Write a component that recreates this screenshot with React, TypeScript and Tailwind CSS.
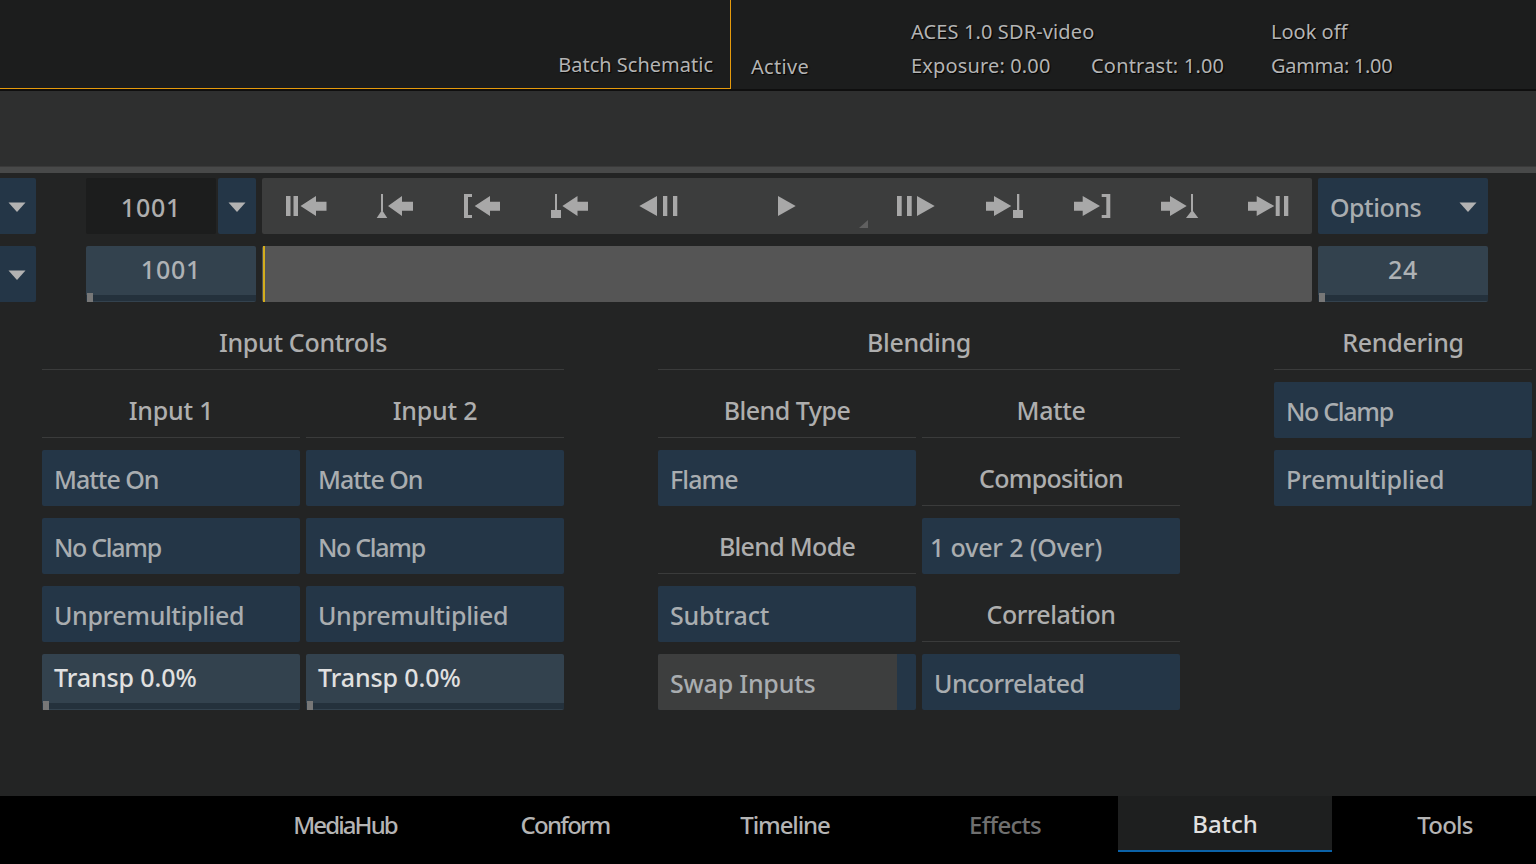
import React from "react";

const Caret = () => (
  <svg width="18" height="10" viewBox="0 0 18 10" className="mt-[2px]"><path d="M0.5 0.5H17.5L9 10Z" fill="#b2b2b2" /></svg>
);

const I = ({ d, className }: { d: string; className: string }) => (
  <svg width="60" height="56" viewBox="0 0 60 56" className={`shrink-0 ${className}`}>
    <path d={d} fill="#a8a8a8" />
  </svg>
);

const larrow = (tip: number, base: number, end: number) =>
  `M${tip} 28L${base} 18V23.7H${end}V32.7H${base}V38Z`;
const rarrow = (start: number, base: number, tip: number) =>
  `M${start} 23.7H${base}V18L${tip} 28L${base} 38V32.7H${start}Z`;
const r = (x0: number, y0: number, x1: number, y1: number) =>
  `M${x0} ${y0}H${x1}V${y1}H${x0}Z`;

const Btn = ({ children, t = "" }: { children: string; t?: string }) => (
  <div className={`h-14 rounded-[2px] bg-[#243647] pl-3 pt-[3px] flex items-center text-[25px] font-medium text-[#a9adb0] ${t}`}>{children}</div>
);

const Head = ({ children, span, t = "" }: { children: string; span?: boolean; t?: string }) => (
  <div className={`h-14 pt-[3px] flex items-center justify-center border-b border-[#3a3b3b] text-[25px] font-medium text-[#aeaeae] ${t} ${span ? "col-span-2" : ""}`}>{children}</div>
);

const Slider = () => (
  <>
    <div className="h-[6px] mb-px bg-[#24313c] shrink-0" />
    <div className="absolute left-px bottom-0 h-[9px] w-[6px] bg-[#777]" />
  </>
);

const Transp = () => (
  <div className="relative h-14 rounded-[2px] bg-[#33424e] flex flex-col text-[25px] font-medium text-[#e0e0e0] tracking-[-0.1px]">
    <div className="flex-1 pl-3 pb-[2px] flex items-center">Transp 0.0%</div>
    <Slider />
  </div>
);

const Tab = ({ children, active, dim, t = "" }: { children: string; active?: boolean; dim?: boolean; t?: string }) => (
  <div
    className={`w-[214px] h-14 pt-[2px] shrink-0 flex items-center justify-center text-[24px] font-medium ${t} ${
      active
        ? "bg-[#1e1f1f] border-b-2 border-[#0b62a8] text-[#e0e0e0]"
        : dim
          ? "text-[#6f6f6f]"
          : "text-[#b4b4b4]"
    }`}
  >
    {children}
  </div>
);

export default function App() {
  const sh = "[text-shadow:1px_1px_1px_#000]";
  return (
    <div className="h-[864px] w-[1536px] overflow-hidden flex flex-col bg-[#232424] font-['Noto_Sans',sans-serif]">
      {/* Top bar */}
      <div className={`h-[91px] shrink-0 flex bg-[#1c1d1d] border-b-2 border-[#0f0f0f] text-[20px] text-[#b4b4b4] ${sh}`}>
        <div className="w-[731px] h-[89px] border-r border-b border-[#e59a0c] flex items-end justify-end pr-[17px] pb-2">Batch Schematic</div>
        <div className="pl-5 w-[180px] flex items-end pb-[7px] tracking-[0.3px]">Active</div>
        <div className="grid grid-cols-[180px_180px_180px] grid-rows-[34px_34px] pt-[17px]">
          <div className="col-span-2 tracking-[0.12px]">ACES 1.0 SDR-video</div>
          <div>Look off</div>
          <div className="tracking-[0.15px]">Exposure: 0.00</div>
          <div className="tracking-[0.2px]">Contrast: 1.00</div>
          <div className="tracking-[-0.3px]">Gamma: 1.00</div>
        </div>
      </div>
      {/* Strip */}
      <div className="h-[76px] shrink-0 bg-[#2e2f2f] border-b border-[#3a3a3a]" />
      <div className="h-[6px] shrink-0 bg-[#484949]" />

      {/* Main */}
      <div className="flex-1 pt-[5px] min-h-0">
        <div className="flex h-14">
          <div className="w-9 rounded-r-[2px] bg-[#243647] flex items-center pl-2"><Caret /></div>
          <div className="ml-[50px] w-[130px] pt-1 rounded-[2px] bg-[#1c1d1d] flex items-center justify-center text-[25px] font-medium text-[#aeaeae] tracking-[0.8px]">1001</div>
          <div className="ml-[2px] w-[38px] rounded-[2px] bg-[#243647] flex items-center justify-center"><Caret /></div>
          <div className="relative ml-[6px] w-[1050px] rounded-[2px] bg-[#3c3d3d] flex pl-[13px]">
            <I className="" d={`${r(11, 18, 15.5, 38)}${r(18.5, 18, 23, 38)}${larrow(25.5, 41, 51.5)}`} />
            <I className="ml-[29px]" d={`M18 32L23.3 40H12.7Z${r(17, 16, 19, 33)}${larrow(24, 38, 49)}`} />
            <I className="ml-[27px]" d={`M13 16H21V19H17V37H21V40H13Z${larrow(23.7, 39, 49)}`} />
            <I className="ml-[28px]" d={`${r(16, 16, 18, 33)}${r(12, 32, 22, 40)}${larrow(23.4, 38.5, 49)}`} />
            <I className="ml-[30px]" d={`M10.3 28L28 18V38Z${r(34, 18, 38.3, 38)}${r(44, 18, 48.3, 38)}`} />
            <I className="ml-[67px]" d="M22 18L39.7 28L22 38Z" />
            <I className="ml-[69px]" d={`${r(12, 18, 16.7, 38)}${r(22, 18, 26.7, 38)}M32 18L49.7 28L32 38Z`} />
            <I className="ml-[29px]" d={`${rarrow(12, 20, 37.3)}${r(43, 16, 45.3, 33)}${r(39, 32, 49, 40)}`} />
            <I className="ml-[28px]" d={`${rarrow(12, 20.7, 38)}M39.7 16H48.3V40H39.7V37H44.3V19H39.7Z`} />
            <I className="ml-[27px]" d={`${rarrow(12, 21, 37.7)}M43.2 32L49.3 40H37Z${r(42, 16, 44, 33)}`} />
            <I className="ml-[29px]" d={`${rarrow(10, 18.7, 36.3)}${r(37.7, 18, 41.7, 38)}${r(46, 18, 50.3, 38)}`} />
            <svg width="9" height="8" viewBox="0 0 9 8" className="absolute left-[597px] top-[42px]">
              <path d="M9 0V8H0Z" fill="#606060" />
            </svg>
          </div>
          <div className="ml-[6px] w-[170px] rounded-[2px] bg-[#243647] flex items-center justify-between pl-[12px] pr-[11px] text-[25px] font-medium text-[#a9adb0] tracking-[-0.5px]">
            <span className="pt-1">Options</span>
            <Caret />
          </div>
        </div>

        <div className="flex h-14 mt-3">
          <div className="w-9 rounded-r-[2px] bg-[#243647] flex items-center pl-2"><Caret /></div>
          <div className="relative ml-[50px] w-[170px] rounded-[2px] bg-[#33424e] flex flex-col text-[25px] font-medium text-[#aeb2b5] tracking-[0.8px]">
            <div className="flex-1 pb-[2px] flex items-center justify-center">1001</div>
            <Slider />
          </div>
          <div className="relative ml-[6px] w-[1050px] rounded-[2px] bg-[#555555]">
            <div className="absolute left-px top-0 h-full w-[2px] bg-[#d3ad1d]" />
          </div>
          <div className="relative ml-[6px] w-[170px] rounded-[2px] bg-[#33424e] flex flex-col text-[25px] font-medium text-[#aeb2b5] tracking-[0.8px]">
            <div className="flex-1 pb-[2px] flex items-center justify-center">24</div>
            <Slider />
          </div>
        </div>

        <div className="flex mt-3 pl-[42px]">
          <div className="w-[522px] grid grid-cols-2 gap-x-[6px] gap-y-3">
            <Head span t="tracking-[-0.3px]">Input Controls</Head>
            <Head t="tracking-[-0.2px]">Input 1</Head>
            <Head t="tracking-[-0.2px]">Input 2</Head>
            <Btn t="tracking-[-1px]">Matte On</Btn>
            <Btn t="tracking-[-1px]">Matte On</Btn>
            <Btn t="tracking-[-1.3px]">No Clamp</Btn>
            <Btn t="tracking-[-1.3px]">No Clamp</Btn>
            <Btn t="tracking-[-0.35px]">Unpremultiplied</Btn>
            <Btn t="tracking-[-0.35px]">Unpremultiplied</Btn>
            <Transp />
            <Transp />
          </div>
          <div className="ml-[94px] w-[522px] grid grid-cols-2 gap-x-[6px] gap-y-3">
            <Head span t="tracking-[-0.35px]">Blending</Head>
            <Head t="tracking-[-0.5px]">Blend Type</Head>
            <Head t="tracking-[-0.4px]">Matte</Head>
            <Btn t="tracking-[-0.9px]">Flame</Btn>
            <Head t="tracking-[-0.7px]">Composition</Head>
            <Head t="tracking-[-0.7px]">Blend Mode</Head>
            <Btn t="tracking-[-0.15px] pl-[8px]">1 over 2 (Over)</Btn>
            <Btn t="tracking-[-0.2px]">Subtract</Btn>
            <Head t="tracking-[-0.5px]">Correlation</Head>
            <div className="h-14 rounded-[2px] bg-[#243647] flex text-[25px] font-medium text-[#a9adb0] tracking-[-0.2px]">
              <div className="w-[239px] rounded-l-[2px] bg-[#3d3e3e] pl-3 pt-[3px] flex items-center">Swap Inputs</div>
            </div>
            <Btn t="tracking-[-0.55px]">Uncorrelated</Btn>
          </div>
          <div className="ml-[94px] w-[258px] flex flex-col gap-3">
            <Head t="tracking-[-0.3px]">Rendering</Head>
            <Btn t="tracking-[-1.3px]">No Clamp</Btn>
            <Btn t="tracking-[-0.2px]">Premultiplied</Btn>
          </div>
        </div>
      </div>

      {/* Bottom nav */}
      <div className="h-[68px] shrink-0 bg-black flex gap-[6px] pl-[238px]">
        <Tab t="tracking-[-1.9px]">MediaHub</Tab>
        <Tab t="tracking-[-1.7px]">Conform</Tab>
        <Tab t="tracking-[-1.1px]">Timeline</Tab>
        <Tab dim t="tracking-[-0.7px]">Effects</Tab>
        <Tab active t="tracking-[0px]">Batch</Tab>
        <Tab t="tracking-[-0.8px]">Tools</Tab>
      </div>
    </div>
  );
}
